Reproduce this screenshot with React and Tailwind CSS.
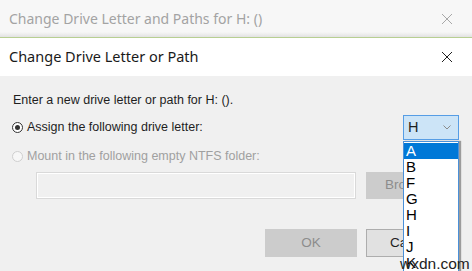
import React from "react";

const letters = ["A", "B", "F", "G", "H", "I", "J", "K"];

export default function App() {
  return (
    <div className="relative w-[472px] h-[271px] overflow-hidden bg-[#f0f0f0]" style={{ fontFamily: "'Liberation Sans', Arial, sans-serif" }}>
      {/* background window title */}
      <div className="h-[37px] bg-[#f7f7f7] flex items-center justify-between pl-[9px] pr-[16px] relative">
        <span className="text-[14px] text-[#a3a3a3]" style={{ fontFamily: "'Noto Sans', 'Open Sans', sans-serif" }}>
          Change Drive Letter and Paths for H: ()
        </span>
        <svg width="12" height="12" viewBox="0 0 12 12" className="mr-[3px]">
          <path d="M1 1L11 11M11 1L1 11" stroke="#a8a8a8" strokeWidth="1" />
        </svg>
        <div className="absolute left-0 right-0 bottom-0 h-[5px] bg-gradient-to-b from-transparent to-[#e2e2e2]" />
      </div>
      <div className="h-[1px] bg-[#b8cf92]" />
      {/* dialog title bar */}
      <div className="h-[38px] bg-white flex items-center justify-between pl-[9px] pr-[16px]">
        <span className="text-[14.5px] text-[#1a1a1a]" style={{ fontFamily: "'Noto Sans', 'Open Sans', sans-serif" }}>
          Change Drive Letter or Path
        </span>
        <svg width="12" height="12" viewBox="0 0 12 12" className="mr-[3px]">
          <path d="M1 1L11 11M11 1L1 11" stroke="#222" strokeWidth="1" />
        </svg>
      </div>
      {/* body */}
      <div className="relative pt-[16px] pl-[13px] text-[12.5px] text-[#1e1e1e]">
        <div className="h-[16px] leading-[16px]">Enter a new drive letter or path for H: ().</div>
        <div className="mt-[11px] h-[16px] flex items-center gap-[4px] -ml-[1px]">
          <span className="w-[11px] h-[11px] rounded-full border border-[#333] bg-white flex items-center justify-center">
            <span className="w-[5px] h-[5px] rounded-full bg-[#333]" />
          </span>
          <span>Assign the following drive letter:</span>
        </div>
        <div className="mt-[13px] h-[16px] flex items-center gap-[4px] -ml-[1px] text-[#a0a0a0]">
          <span className="w-[11px] h-[11px] rounded-full border border-[#cfcfcf] bg-[#f7f7f7]" />
          <span>Mount in the following empty NTFS folder:</span>
        </div>
        <div className="mt-[8px] flex gap-[10px] ml-[23px]">
          <div className="w-[320px] h-[27px] border border-[#d9d9d9] bg-[#f0f0f0] shadow-[inset_0_0_0_1px_#ffffff]" />
          <div className="w-[80px] h-[27px] bg-[#cccccc] flex items-center pl-[19px] text-[#8c8c8c] text-[13.5px]">Browse...</div>
        </div>
        <div className="mt-[30px] flex gap-[9px] ml-[252px]">
          <div className="w-[92px] h-[28px] bg-[#cccccc] flex items-center justify-center text-[#8c8c8c] text-[13.5px]">OK</div>
          <div className="w-[92px] h-[28px] bg-[#e1e1e1] border border-[#adadad] flex items-center pl-[23px] text-[13.5px]">Cancel</div>
        </div>

        {/* combobox */}
        <div className="absolute left-[403px] top-[39px] w-[56px] h-[25px] bg-[#cce4f7] border border-[#569de5] flex items-center justify-between pl-[4px] pr-[7px] text-[14.5px]">
          <span>H</span>
          <svg width="8" height="5" viewBox="0 0 8 5">
            <path d="M0.5 0.5L4 4L7.5 0.5" stroke="#8a8a8a" strokeWidth="1" fill="none" />
          </svg>
        </div>
        {/* dropdown list */}
        <div className="absolute left-[403px] top-[65px] w-[56px] h-[140px] bg-white border border-[#4a90d9] shadow-[2px_0_1px_rgba(0,0,0,0.35)] text-[15px] text-black pt-[1px]">
          {letters.map((l, i) => (
            <div
              key={l}
              className={
                i === 0
                  ? "h-[16px] leading-[16px] pl-[2px] bg-[#0078d7] text-white"
                  : "h-[16px] leading-[16px] pl-[2px]"
              }
            >
              {l}
            </div>
          ))}
        </div>
      </div>
      <div className="absolute left-[400px] top-[256px] text-[15.5px] text-[#222] leading-[15px]" style={{ fontFamily: "'Liberation Sans', Arial, sans-serif" }}>
        wxdn.com
      </div>
    </div>
  );
}
